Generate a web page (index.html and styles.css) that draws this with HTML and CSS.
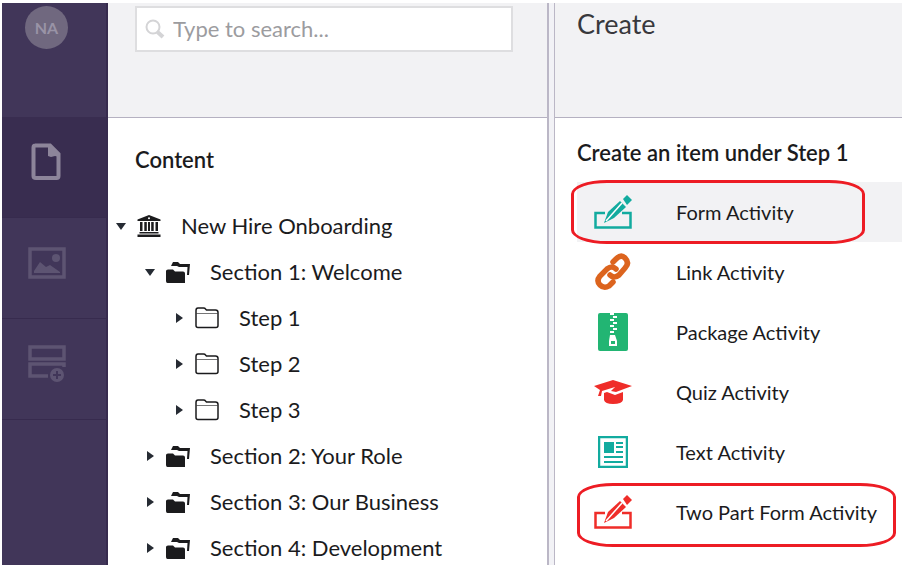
FILE: index.html
```html
<!DOCTYPE html>
<html lang="en">
<head>
    <meta charset="UTF-8">
    <meta name="viewport" content="width=device-width, initial-scale=1.0">
    <title>Content</title>
    <link rel="stylesheet" href="styles.css">
</head>
<body>

    <!-- Shared icons -->
    <svg class="sprite" aria-hidden="true">
        <symbol id="bank" viewBox="0 0 24 22">
            <path d="M12 0 23.500 4.500V6H.500V4.500zM2.500 17h19v1.500h-19zM.500 19.500h23V22H.500zM3 7h2.500v9H3zM7.300 7h2.500v9H7.300zM14.200 7h2.500v9h-2.500zM18.500 7H21v9h-2.500zM11 7h2v9h-2z"/>
            <circle cx="12" cy="3.300" r="1" fill="#fff"/>
        </symbol>
        <symbol id="folders" viewBox="0 0 24 22">
            <path d="M5 5 7 1h5l2 2h10l-1 11h-2l.500-8H13l-2-1zM0 10q0-1.500 2-1.500h5l2 2h8q2 0 2 2V22H1.500Q0 22 0 20z"/>
        </symbol>
        <symbol id="folder" viewBox="0 0 24 22">
            <path d="M1 18.500V3.500Q1 1 3 1h5.500q1.500 0 2 1l1 1h9Q23 3 23 5.500v13q0 2-2 2H3q-2 0-2-2z" fill="none" stroke="currentColor" stroke-width="1.500"/>
            <path d="M1.500 6.500h21" stroke="currentColor" stroke-opacity=".6"/>
        </symbol>
        <symbol id="form" viewBox="0 0 38 34">
            <path d="M11 18H1.500v14.500h35V18H28" fill="none" stroke="currentColor" stroke-width="2.500"/>
            <path d="M10 28l4-11L26 6l6 6-12 11z"/>
            <path d="M29 4l4-4 5 5-5 5z"/>
            <path d="M12 26 28 8" fill="none" stroke="#fff" stroke-width="1.500"/>
        </symbol>
    </svg>

    <div class="app">
        <nav class="sidebar" aria-label="Sections">
            <div class="account">
                <button class="avatar" type="button">NA</button>
            </div>
            <a class="nav-item active" href="#" aria-label="Content">
                <svg width="32" height="38" viewBox="0 0 32 38">
                    <path d="M4 2.500h15l8.500 8.500v22q0 2-2 2H5q-2.500 0-2.500-2V4.500q0-2 2-2z" fill="none" stroke="currentColor" stroke-width="4"/>
                    <path d="M17 2h3l9 9v3l-5-1-4 1-3-1z"/>
                </svg>
            </a>
            <a class="nav-item" href="#" aria-label="Media">
                <svg width="38" height="32" viewBox="0 0 38 32">
                    <path d="M2 2h34v28H2z" fill="none" stroke="currentColor" stroke-width="3.500"/>
                    <circle cx="28" cy="11" r="4"/>
                    <path d="M6 26v-2l6-9 6 5 4-2 10 7v1z"/>
                </svg>
            </a>
            <a class="nav-item" href="#" aria-label="Forms">
                <svg width="38" height="38" viewBox="0 0 38 38">
                    <path d="M2 2h34v12H2zM36 22v-3H2v12h18" fill="none" stroke="currentColor" stroke-width="3.500"/>
                    <circle cx="29" cy="30" r="7"/>
                    <path d="M29 26v8M25 30h8" stroke="#413659" stroke-width="2"/>
                </svg>
            </a>
        </nav>

        <section class="tree-panel">
            <header class="panel-header">
                <label class="search">
                    <svg width="20" height="20" viewBox="0 0 20 20">
                        <circle cx="8" cy="8" r="6.500" fill="none" stroke="currentColor" stroke-width="2"/>
                        <path d="M12.500 13 18 18" stroke="currentColor" stroke-width="4"/>
                    </svg>
                    <input type="text" placeholder="Type to search..." aria-label="Type to search">
                </label>
            </header>
            <h2 class="tree-title">Content</h2>
            <ul class="tree">
                <li>
                    <div class="node">
                        <button class="toggle open" type="button" aria-label="Collapse"></button>
                        <svg class="node-icon"><use href="#bank"/></svg>
                        <a href="#">New Hire Onboarding</a>
                    </div>
                    <ul>
                        <li>
                            <div class="node">
                                <button class="toggle open" type="button" aria-label="Collapse"></button>
                                <svg class="node-icon"><use href="#folders"/></svg>
                                <a href="#">Section 1: Welcome</a>
                            </div>
                            <ul>
                                <li class="node">
                                    <button class="toggle" type="button" aria-label="Expand"></button>
                                    <svg class="node-icon"><use href="#folder"/></svg>
                                    <a href="#">Step 1</a>
                                </li>
                                <li class="node">
                                    <button class="toggle" type="button" aria-label="Expand"></button>
                                    <svg class="node-icon"><use href="#folder"/></svg>
                                    <a href="#">Step 2</a>
                                </li>
                                <li class="node">
                                    <button class="toggle" type="button" aria-label="Expand"></button>
                                    <svg class="node-icon"><use href="#folder"/></svg>
                                    <a href="#">Step 3</a>
                                </li>
                            </ul>
                        </li>
                        <li class="node">
                            <button class="toggle" type="button" aria-label="Expand"></button>
                            <svg class="node-icon"><use href="#folders"/></svg>
                            <a href="#">Section 2: Your Role</a>
                        </li>
                        <li class="node">
                            <button class="toggle" type="button" aria-label="Expand"></button>
                            <svg class="node-icon"><use href="#folders"/></svg>
                            <a href="#">Section 3: Our Business</a>
                        </li>
                        <li class="node">
                            <button class="toggle" type="button" aria-label="Expand"></button>
                            <svg class="node-icon"><use href="#folders"/></svg>
                            <a href="#">Section 4: Development</a>
                        </li>
                    </ul>
                </li>
            </ul>
        </section>

        <div class="divider"></div>

        <section class="create-panel">
            <header class="panel-header">
                <h1>Create</h1>
            </header>
            <h2 class="create-title">Create an item under Step 1</h2>
            <ul class="types">
                <li class="type selected">
                    <svg class="teal" width="38" height="34"><use href="#form"/></svg>
                    <a href="#">Form Activity</a>
                    <span class="marker"></span>
                </li>
                <li class="type">
                    <svg class="orange" width="36" height="38" viewBox="0 0 36 38">
                        <g fill="none" stroke="currentColor" stroke-width="5.500" stroke-linecap="round">
                            <path d="M18 9l3-3q5-5 9-1 5 5 0 10l-6 7q-5 4-9 0"/>
                            <path d="M21 16q-4-4-9 0l-7 7q-4 5 0 9t9 1l4-4"/>
                        </g>
                    </svg>
                    <a href="#">Link Activity</a>
                </li>
                <li class="type">
                    <svg class="green" width="30" height="38" viewBox="0 0 30 38">
                        <rect width="30" height="38" rx="2"/>
                        <path d="M12 1h4M15 4h4M12 7h4M15 10h4M12 13h4M15 16h4M12 19h4" stroke="#fff" stroke-width="2"/>
                        <path d="M12 22h5l2 6v5h-8v-5z" fill="#fff"/>
                        <path d="M13 28h4v3h-4z"/>
                    </svg>
                    <a href="#">Package Activity</a>
                </li>
                <li class="type">
                    <svg class="red" width="38" height="26" viewBox="0 0 38 26">
                        <path d="M0 7 19 1l19 6-16 6-5-1 4-4-13 4-1 5H4l2-6z"/>
                        <path d="M10 14l3-1 8 3 8-3v8q-1 4-10 4-8 0-9-4z"/>
                    </svg>
                    <a href="#">Quiz Activity</a>
                </li>
                <li class="type">
                    <svg class="teal" width="30" height="32" viewBox="0 0 30 32">
                        <path d="M1 1h28v30H1z" fill="none" stroke="currentColor" stroke-width="2.500"/>
                        <path d="M6 6h10v11H6z"/>
                        <path d="M18 7h7M18 11h7M18 16h7M6 21h19M6 26h19" stroke="currentColor" stroke-width="2"/>
                    </svg>
                    <a href="#">Text Activity</a>
                </li>
                <li class="type">
                    <svg class="red" width="38" height="34"><use href="#form"/></svg>
                    <a href="#">Two Part Form Activity</a>
                    <span class="marker wide"></span>
                </li>
            </ul>
        </section>
    </div>

</body>
</html>
```
FILE: styles.css
```css
* {
    margin: 0;
    padding: 0;
    box-sizing: border-box;
}

body {
    background: #fff;
    color: #1b1b1d;
    font-family: Lato, sans-serif;
    font-size: 22px;
    line-height: 26px;
    height: 100vh;
    padding: 3px 0 0 2px;
    overflow: hidden;
}

ul {
    list-style: none;
}

a {
    color: inherit;
    text-decoration: none;
    white-space: nowrap;
}

button {
    border: none;
    background: none;
    font: inherit;
    cursor: pointer;
}

svg {
    fill: currentColor;
    flex-shrink: 0;
}

.sprite {
    display: none;
}

.app {
    display: grid;
    grid-template-columns: 106px 439fr 8px 347fr;
    height: 100%;
}

/* Sidebar */
.sidebar {
    background: #413659;
    border-right: 2px solid #372b4e;
}

.account {
    display: flex;
    justify-content: center;
    height: 114px;
    padding: 3px 15px 0 0;
}

.avatar {
    width: 43px;
    height: 43px;
    border-radius: 50%;
    background: #70687f;
    color: #9993a6;
    font-size: 16px;
    font-weight: bold;
}

.nav-item {
    display: flex;
    justify-content: center;
    align-items: center;
    height: 101px;
    padding: 0 15px 10px 0;
    border-bottom: 1px solid #372b4e;
    color: #5d5472;
}

.nav-item.active {
    background: #392d50;
    color: #8d859a;
}

/* Panels */
.panel-header {
    height: 115px;
    background: #f2f2f4;
    border-bottom: 1px solid #b5b1c1;
}

.tree-panel .panel-header {
    padding: 3px 34px 0 27px;
}

.create-panel .panel-header {
    padding: 5px 22px;
}

.divider {
    background: #f2f2f6;
    border: solid #bbb7c6;
    border-width: 0 1px 0 2px;
}

h1 {
    font-size: 27px;
    line-height: 32px;
    font-weight: normal;
    color: #38383c;
}

h2 {
    font-size: 22px;
    line-height: 26px;
    font-weight: 600;
}

.search {
    display: flex;
    align-items: center;
    gap: 8px;
    height: 46px;
    padding-left: 8px;
    background: #fff;
    border: 2px solid #dedee0;
    color: #d4d4d6;
}

.search input {
    flex: 1;
    min-width: 0;
    border: none;
    outline: none;
    background: none;
    font: inherit;
    color: #1b1b1d;
}

.search input::placeholder {
    color: #9c9c9f;
}

/* Content tree */
.tree-title {
    padding: 29px 27px 30px;
}

.tree {
    padding-left: 7px;
}

.tree ul {
    padding-left: 29px;
}

.node {
    display: flex;
    align-items: center;
    height: 46px;
}

.toggle {
    display: flex;
    justify-content: center;
    align-items: center;
    width: 12px;
    height: 24px;
    margin-right: 10px;
}

.toggle::before {
    content: "";
    border: solid transparent;
    border-width: 5px 0 5px 7px;
    border-left-color: #262b33;
}

.toggle.open::before {
    border: solid transparent;
    border-width: 7px 5px 0;
    border-top-color: #262b33;
}

.node-icon {
    width: 24px;
    height: 22px;
    margin-right: 20px;
}

/* Create list */
.create-title {
    padding: 22px 22px 16px;
}

.types {
    padding-left: 22px;
}

.type {
    position: relative;
    display: grid;
    grid-template-columns: 72px 1fr;
    column-gap: 27px;
    align-items: center;
    height: 60px;
    font-size: 20px;
}

.type svg {
    justify-self: center;
}

.type.selected {
    background: #f2f2f4;
}

.teal {
    color: #12ab9f;
}

.orange {
    color: #dc641e;
}

.green {
    color: #22b573;
}

.red {
    color: #ef2d29;
}

.marker {
    position: absolute;
    top: -2px;
    left: -6px;
    width: 294px;
    height: 64px;
    border: 3px solid #ed1c24;
    border-radius: 36px / 14px;
    pointer-events: none;
}

.marker.wide {
    top: 1px;
    left: 0;
    width: 319px;
}
```
